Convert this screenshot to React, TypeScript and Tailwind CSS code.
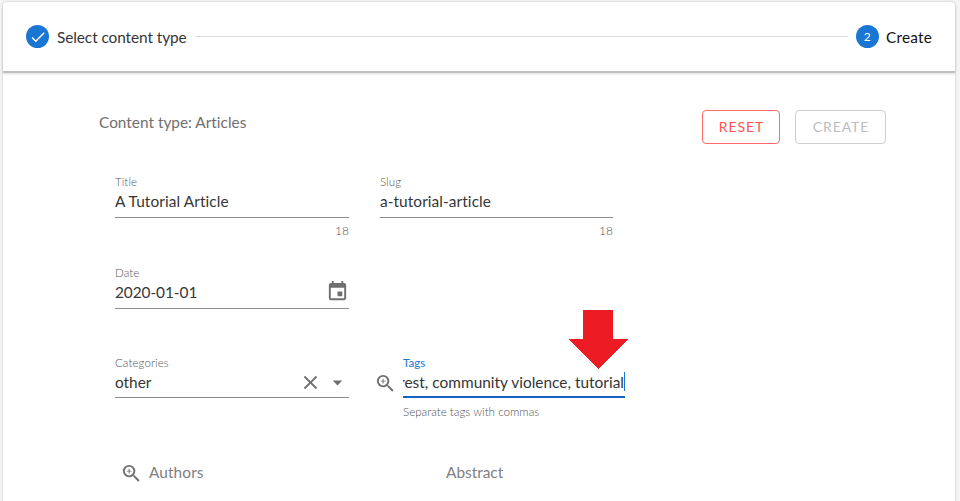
import type { ReactNode } from "react";
import { MdArrowDropDown, MdCheck, MdClose, MdEvent, MdZoomIn } from "react-icons/md";

type FieldProps = {
  label: string;
  width: string;
  line: string;
  height?: string;
  labelClass?: string;
  helper?: ReactNode;
  children: ReactNode;
};

function Field({ label, width, line, height = "h-7", labelClass = "text-[#555555] font-light tracking-[0.08px]", helper, children }: FieldProps) {
  return (
    <div className={`flex flex-col ${width}`}>
      <div className={`h-4 text-[11.5px] leading-4 ${labelClass}`}>{label}</div>
      <div className={`flex items-start justify-between pt-px text-[15.4px] leading-5 text-[#363636] ${height} ${line}`}>
        {children}
      </div>
      {helper}
    </div>
  );
}

function Counter({ value }: { value: number }) {
  return <div className="mt-[5px] text-right text-[12px] leading-4 font-light text-[#505050]">{value}</div>;
}

export default function App() {
  return (
    <div className="h-[501px] w-[960px] overflow-hidden bg-[#f5f5f5] pt-[2px] pl-[3px] font-['Lato',sans-serif] [font-variant-ligatures:none]">
      <div className="h-[520px] w-[952px] rounded bg-white shadow-[0_0_3px_rgba(0,0,0,0.2)]">
        <header className="flex h-[69px] items-center rounded-t pr-[23px] pl-[23px] shadow-[0_2px_1px_#bcbebc,0_3px_3px_rgba(0,0,0,0.12)]">
          <div className="flex size-[23px] items-center justify-center rounded-full bg-[#1976d2] text-white">
            <MdCheck className="size-[18px]" />
          </div>
          <span className="ml-2 text-[15.4px] leading-5 tracking-[-0.08px] text-[#363636]">Select content type</span>
          <div className="mx-2 h-px flex-1 bg-[#dedede]" />
          <div className="flex size-[23px] items-center justify-center rounded-full bg-[#1976d2] text-[12px] text-white">2</div>
          <span className="ml-[7.5px] text-[15.4px] leading-5 tracking-[0.18px] text-[#111111]">Create</span>
        </header>

        <main className="pt-[39px] pr-[69px] pl-[96px]">
          <div className="flex h-[34px] items-start">
            <h1 className="mt-0.5 flex-1 text-[15.4px] leading-5 text-[#707070]">Content type: Articles</h1>
            <button className="h-[34px] w-[78px] rounded border border-[#ff6b6b] pb-0.5 pl-px text-[14px] tracking-[0.9px] text-[#ff5252]">RESET</button>
            <button className="ml-[15px] h-[34px] w-[91px] rounded border border-[#cfcfcf] pb-0.5 pl-px text-[14px] tracking-[0.9px] text-[#bdbdbd]">CREATE</button>
          </div>

          <div className="mt-[30px] ml-[16px] flex h-[91px] gap-[31px]">
            <Field label="Title" width="w-[234px]" line="border-b border-[#8c8c8c]" helper={<Counter value={18} />}>
              <span className="tracking-[0.1px]">A Tutorial Article</span>
            </Field>
            <Field label="Slug" width="w-[233px]" line="border-b border-[#8c8c8c]" helper={<Counter value={18} />}>
              <span className="tracking-[0.08px]">a-tutorial-article</span>
            </Field>
          </div>

          <div className="ml-[16px] flex h-[90px]">
            <Field label="Date" width="w-[234px]" line="border-b border-[#8c8c8c]">
              <span className="tracking-[-0.06px]">2020-01-01</span>
              <MdEvent className="-mt-[2px] size-[23px] text-[#6f6f6f]" />
            </Field>
          </div>

          <div className="ml-[16px] flex h-[106px]">
            <Field label="Categories" width="w-[234px]" height="h-[27px]" line="border-b border-[#8c8c8c]">
              <span>other</span>
              <span className="flex gap-[4px] text-[#6f6f6f]">
                <MdClose className="-mt-px size-[23px]" />
                <MdArrowDropDown className="-mt-px size-[23px]" />
              </span>
            </Field>
            <MdZoomIn className="mt-[17px] ml-[25px] size-[23px] text-[#6f6f6f]" />
            <div className="ml-[6px]">
              <Field
                label="Tags"
                labelClass="text-[#1976d2]"
                width="w-[222px]"
                line="border-b-2 border-[#1565c0]"
                height="h-[27px]"
                helper={<div className="mt-[6px] text-[11.6px] leading-4 font-light text-[#505050]">Separate tags with commas</div>}
              >
                <div className="flex w-full items-start justify-end overflow-hidden">
                  <span className="whitespace-nowrap tracking-[0.02px]">rest, community violence, tutorial</span>
                  <span className="h-[19px] w-px shrink-0 bg-[#1976d2]" />
                </div>
              </Field>
            </div>
          </div>

          <div className="ml-[21px] flex h-6 items-center text-[15.4px] leading-5 text-[#808080]">
            <MdZoomIn className="size-[23px] text-[#6f6f6f]" />
            <span className="-mt-0.5 ml-[6px] w-[297px] tracking-[0.1px]">Authors</span>
            <span className="-mt-0.5">Abstract</span>
          </div>
        </main>
      </div>
      <svg className="absolute top-[310px] left-[569px]" width="60" height="59" shapeRendering="crispEdges">
        <path d="M14 0H44V29H59L29.5 59L0 29H14Z" fill="#ed1c24" />
      </svg>
    </div>
  );
}
